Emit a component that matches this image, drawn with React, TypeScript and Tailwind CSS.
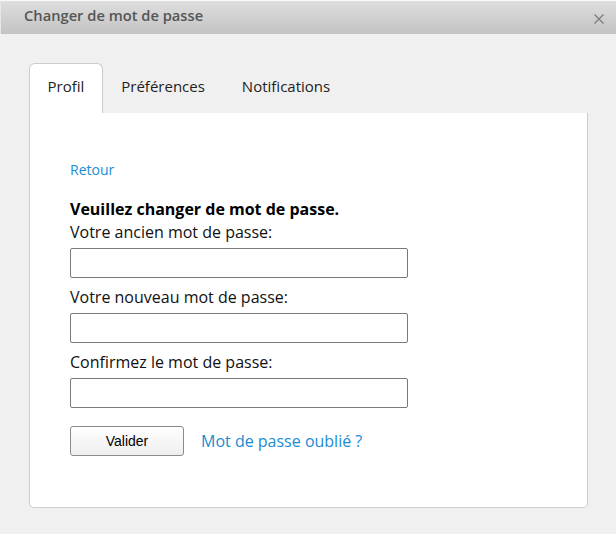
import { useState } from "react";

const FONT = { fontFamily: '"Open Sans", "DejaVu Sans", sans-serif' };

const TABS = ["Profil", "Préférences", "Notifications"];

function Field({
  label,
  value,
  onChange,
  first,
}: {
  label: string;
  value: string;
  onChange: (v: string) => void;
  first?: boolean;
}) {
  return (
    <div className={first ? "" : "mt-[8px]"}>
      <div className="text-[16px] leading-[23px] text-[#111]">{label}</div>
      <input
        type="password"
        value={value}
        onChange={(e) => onChange(e.target.value)}
        className="mt-[4px] block w-[338px] h-[30px] border border-[#7a7a7a] rounded-[2px] bg-white px-2 outline-none"
      />
    </div>
  );
}

export default function App() {
  const [tab, setTab] = useState("Profil");
  const [oldPw, setOldPw] = useState("");
  const [newPw, setNewPw] = useState("");
  const [confirmPw, setConfirmPw] = useState("");

  return (
    <div className="w-[616px] h-[534px] bg-[#f0f0f0] overflow-hidden" style={FONT}>
      {/* title bar */}
      <div className="h-[34px] flex items-start justify-between pl-[23px] pr-[12px] border-t border-t-[#fafafa] border-l border-l-[#e6e6e6] bg-gradient-to-b from-[#dedede] to-[#c3c3c3]">
        <span className="pt-[4px] text-[14.7px] leading-[20px] font-semibold text-[#555]">
          Changer de mot de passe
        </span>
        <svg className="mt-[13px]" width="10" height="10" viewBox="0 0 10 10">
          <path d="M0.5 0.5 L9.5 9.5 M9.5 0.5 L0.5 9.5" stroke="#7a7a7a" strokeWidth="1.2" />
        </svg>
      </div>

      <div className="pt-[29px] pl-[29px] pr-[28px]">
        {/* tabs */}
        <div className="flex">
          {TABS.map((t) => (
            <button
              key={t}
              onClick={() => setTab(t)}
              className={`h-[50px] px-[17.5px] pt-[12px] text-[15px] leading-[20px] text-[#222] border border-b-0 rounded-t-[6px] flex items-start ${
                tab === t ? "bg-white border-[#cccccc]" : "border-transparent"
              }`}
            >
              {t}
            </button>
          ))}
        </div>

        {/* panel */}
        <div className="h-[395px] bg-white border-x border-b border-[#cccccc] rounded-b-[5px] pl-[40px] pt-[47px]">
          <a href="#" className="block w-fit text-[14px] leading-[20px] text-[#1b8bd3]">
            Retour
          </a>

          <div className="mt-[18px] text-[16px] leading-[23px] font-bold text-black">
            Veuillez changer de mot de passe.
          </div>

          <Field first label="Votre ancien mot de passe:" value={oldPw} onChange={setOldPw} />
          <Field label="Votre nouveau mot de passe:" value={newPw} onChange={setNewPw} />
          <Field label="Confirmez le mot de passe:" value={confirmPw} onChange={setConfirmPw} />

          <div className="mt-[18px] flex items-center gap-[17px]">
            <button
              className="w-[114px] h-[30px] border border-[#8a8a8a] rounded-[3px] bg-gradient-to-b from-white to-[#eeeeee] text-[14px] text-black"
              style={{ fontFamily: '"Liberation Sans", Arial, sans-serif' }}
            >
              Valider
            </button>
            <a href="#" className="text-[16px] leading-[22px] text-[#1b8bd3]">
              Mot de passe oublié ?
            </a>
          </div>
        </div>
      </div>
    </div>
  );
}
